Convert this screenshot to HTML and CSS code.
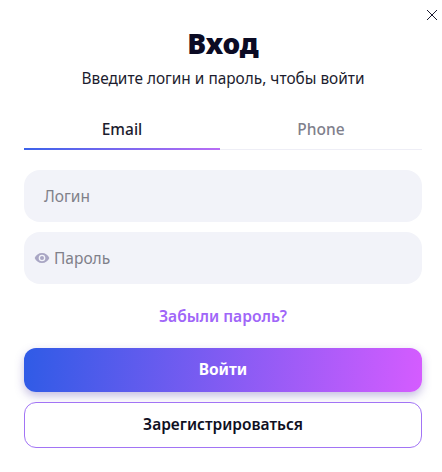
FILE: index.html
```html
<!DOCTYPE html>
<html lang="ru">
<head>
<meta charset="utf-8">
<title>Вход</title>
<link rel="stylesheet" href="styles.css">
</head>
<body>
<main class="modal">
  <div class="close-row">
    <button class="close" aria-label="Закрыть">
      <svg width="12" height="12" viewBox="0 0 12 12"><path d="M1 1l10 10M11 1L1 11" stroke="#1a1a2e" stroke-width="1" fill="none"/></svg>
    </button>
  </div>
  <h1 class="title">Вход</h1>
  <p class="subtitle">Введите логин и пароль, чтобы войти</p>
  <div class="tabs">
    <div class="tab tab-active">Email</div>
    <div class="tab">Phone</div>
  </div>
  <div class="field field-login">Логин</div>
  <div class="field field-pass">
    <svg class="eye" width="16" height="16" viewBox="0 0 24 24"><path fill="#a9a6c4" d="M12 4.500C7 4.500 2.700 7.600 1 12c1.700 4.400 6 7.500 11 7.500s9.300-3.100 11-7.500c-1.700-4.400-6-7.500-11-7.500zM12 17a5 5 0 1 1 0-10 5 5 0 0 1 0 10zm0-8a3 3 0 1 0 0 6 3 3 0 0 0 0-6z"/></svg>
    <span>Пароль</span>
  </div>
  <a class="forgot" href="#">Забыли пароль?</a>
  <button class="btn btn-primary">Войти</button>
  <button class="btn btn-outline">Зарегистрироваться</button>
</main>
</body>
</html>
```
FILE: styles.css
```css
* { box-sizing: border-box; }
html, body { margin: 0; background: #fff; }
body { font-family: "Noto Sans", "Open Sans", sans-serif; color: #10101f; }
.modal { width: 442px; height: 472px; padding: 8px 20px 0 24px; display: flex; flex-direction: column; overflow: hidden; }
.close-row { display: flex; justify-content: flex-end; height: 14px; margin-right: -17px; }
.close { border: 0; background: none; padding: 0; width: 14px; height: 14px; display: flex; align-items: center; justify-content: center; }
.title { margin: 1px 0 0; height: 40px; line-height: 40px; font-size: 28px; font-weight: 900; text-align: center; color: #0b0b24; }
.subtitle { margin: 4px 0 0; height: 24px; line-height: 24px; font-size: 15.4px; text-align: center; color: #1c1c2e; }
.tabs { margin-top: 27px; display: grid; grid-template-columns: 196px 1fr; height: 32px; border-bottom: 1px solid #eeeef6; }
.tab { text-align: center; font-size: 15.5px; font-weight: 500; line-height: 22px; color: #7f7f8c; position: relative; }
.tab-active { color: #1c1c2e; }
.tab-active::after { content: ""; position: absolute; left: 0; right: 0; bottom: -1px; height: 2px; background: linear-gradient(90deg, #3b62ea, #b96df5); }
.field { margin-top: 20px; height: 52px; border-radius: 16px; background: #f2f3f9; display: flex; align-items: center; font-size: 15.5px; color: #808089; }
.field-login { padding-left: 20px; }
.field-pass { margin-top: 10px; padding-left: 10px; gap: 4px; }
.eye { flex: none; }
.forgot { margin-top: 22px; height: 20px; line-height: 20px; text-align: center; font-size: 15.6px; font-weight: 600; color: #a066f8; text-decoration: none; }
.btn { width: 398px; font: inherit; font-size: 15.5px; font-weight: 700; text-align: center; border-radius: 12px; padding: 0 0 2px; }
.btn-primary { margin-top: 22px; height: 44px; border: 0; color: #fff; background: linear-gradient(95deg, #2f5be6, #d55cff); box-shadow: 0 4px 10px rgba(90, 70, 170, .35); }
.btn-outline { margin-top: 10px; height: 46px; background: #fff; border: 1px solid #a274f5; color: #10101f; font-weight: 600; }
```
